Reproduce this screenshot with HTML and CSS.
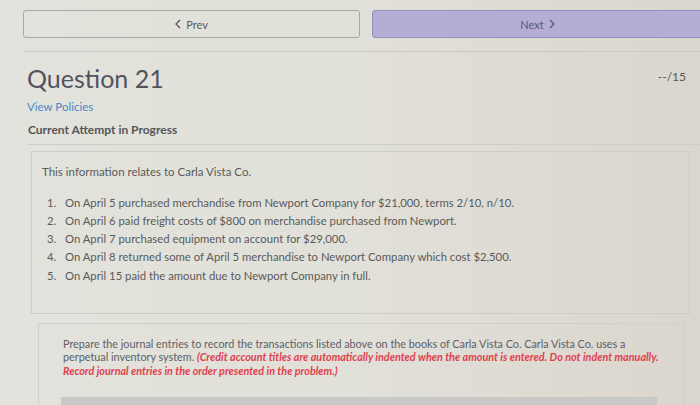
FILE: index.html
```html
<!DOCTYPE html>
<html lang="en">
<head>
<meta charset="utf-8">
<title>Question 21</title>
<link rel="stylesheet" href="styles.css">
</head>
<body>
<div class="page">
  <nav class="nav">
    <button class="btn prev" type="button">
      <svg class="chev" width="6" height="10" viewBox="0 0 6 10"><path d="M5 1 L1 5 L5 9" fill="none" stroke="currentColor" stroke-width="1.3"/></svg>
      <span>Prev</span>
    </button>
    <button class="btn next" type="button">
      <span>Next</span>
      <svg class="chev" width="6" height="10" viewBox="0 0 6 10"><path d="M1 1 L5 5 L1 9" fill="none" stroke="currentColor" stroke-width="1.3"/></svg>
    </button>
  </nav>
  <div class="rule"></div>
  <div class="qhead">
    <h1 class="title">Question 21</h1>
    <span class="score">--/15</span>
  </div>
  <a class="policies" href="#">View Policies</a>
  <div class="attempt">Current Attempt in Progress</div>
  <div class="rule2"></div>
  <section class="info">
    <p class="intro">This information relates to Carla Vista Co.</p>
    <ol class="items">
      <li><span class="n">1.</span><span>On April 5 purchased merchandise from Newport Company for $21,000, terms 2/10, n/10.</span></li>
      <li><span class="n">2.</span><span>On April 6 paid freight costs of $800 on merchandise purchased from Newport.</span></li>
      <li><span class="n">3.</span><span>On April 7 purchased equipment on account for $29,000.</span></li>
      <li><span class="n">4.</span><span>On April 8 returned some of April 5 merchandise to Newport Company which cost $2,500.</span></li>
      <li><span class="n">5.</span><span>On April 15 paid the amount due to Newport Company in full.</span></li>
    </ol>
  </section>
  <section class="task">
    <p class="prompt">Prepare the journal entries to record the transactions listed above on the books of Carla Vista Co. Carla Vista Co. uses a perpetual inventory system. <em class="warn">(Credit account titles are automatically indented when the amount is entered. Do not indent manually. Record journal entries in the order presented in the problem.)</em></p>
    <div class="table-top"></div>
  </section>
</div>
</body>
</html>
```

FILE: styles.css
```css
html, body {
  margin: 0;
  padding: 0;
}

body {
  width: 700px;
  height: 405px;
  overflow: hidden;
  background: linear-gradient(90deg, #e2e3dc 0%, #e1e0d9 50%, #dbd6cd 100%);
  font-family: Lato, "Open Sans", sans-serif;
  color: #5a5a5a;
}

.page {
  width: 680px;
  padding-left: 23px;
}

.nav {
  display: flex;
  gap: 12px;
  padding-top: 10px;
}

.btn {
  height: 28px;
  border-radius: 3px;
  display: flex;
  align-items: center;
  justify-content: center;
  gap: 5px;
  font-family: Lato, sans-serif;
  font-size: 11px;
  padding: 0;
  flex: none;
}

.prev {
  width: 337px;
  background: transparent;
  border: 1px solid #a8a8a4;
  color: #5a5a5e;
}

.next {
  width: 331px;
  background: #b4aed5;
  border: 1px solid #948fba;
  color: #5a5779;
}

.chev {
  display: block;
}

.rule {
  margin-top: 13px;
  margin-left: 1px;
  height: 1px;
  background: #c9c9c4;
}

.qhead {
  display: flex;
  justify-content: space-between;
  align-items: flex-start;
  margin-top: 11px;
  padding-left: 4px;
}

.title {
  margin: 0;
  font-size: 25px;
  line-height: 30px;
  font-weight: 400;
  color: #53535e;
}

.score {
  margin-top: 7px;
  margin-right: 17px;
  font-size: 12px;
  line-height: 14px;
  color: #55555c;
}

.policies {
  display: block;
  margin-top: 7px;
  padding-left: 4px;
  font-size: 11.5px;
  line-height: 14px;
  color: #4a88c6;
  text-decoration: none;
}

.attempt {
  margin-top: 9px;
  padding-left: 5px;
  font-size: 12px;
  line-height: 14px;
  font-weight: 700;
  color: #55555a;
}

.rule2 {
  margin-top: 7px;
  margin-left: 5px;
  height: 1px;
  background: #cfcfca;
}

.info {
  margin-top: 6px;
  margin-left: 8px;
  width: 659px;
  border: 1px solid #cdcdc8;
  padding: 12.5px 0 28px 10px;
  box-sizing: border-box;
}

.intro {
  margin: 0;
  font-size: 11.5px;
  line-height: 14px;
}

.items {
  list-style: none;
  margin: 15px 0 0 0;
  padding: 0 0 0 5px;
  font-size: 11.3px;
  line-height: 18.3px;
}

.items li {
  display: flex;
}

.n {
  width: 18px;
  flex: none;
}

.task {
  margin-top: 9px;
  margin-left: 15px;
  width: 647px;
  border: 1px solid #d0d0ca;
  border-bottom: none;
  padding: 13px 0 0 24px;
  box-sizing: border-box;
  height: 90px;
}

.prompt {
  margin: 0;
  width: 604px;
  font-size: 10.8px;
  line-height: 13.5px;
  color: #606066;
}

.warn {
  font-weight: 700;
  font-style: italic;
  color: #e0404f;
}

.table-top {
  margin-top: 19.5px;
  margin-left: -2px;
  width: 596px;
  height: 12px;
  background: #c8c8c5;
}
```
